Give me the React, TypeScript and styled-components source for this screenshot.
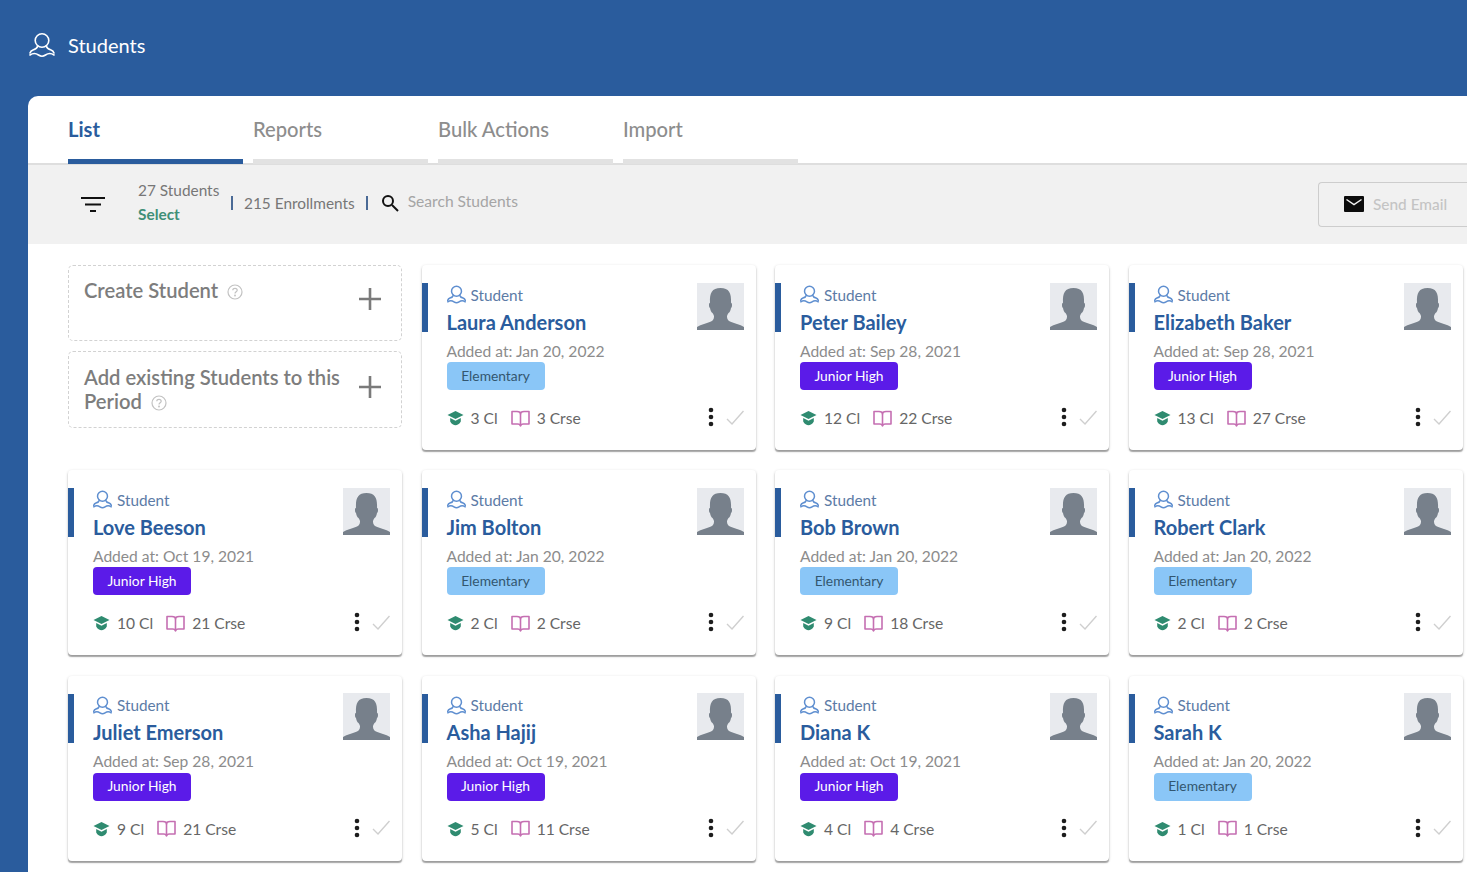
import React from "react";
import styled, { createGlobalStyle } from "styled-components";

const Global = createGlobalStyle`
  html, body { margin: 0; padding: 0; height: 872px; overflow: hidden; background: #2a5c9d; }
  body { font-family: Lato, "Liberation Sans", sans-serif; }
  * { box-sizing: border-box; }
`;

const Page = styled.div`
  width: 1467px;
  height: 872px;
  overflow: hidden;
  background: #2a5c9d;
  display: flex;
  flex-direction: column;
`;
const Header = styled.header`
  height: 96px;
  flex: none;
  display: flex;
  align-items: center;
  gap: 13px;
  padding: 0 0 7px 29px;
  color: #fff;
  font-size: 20px;
`;
const Sheet = styled.main`
  margin-left: 28px;
  flex: 1;
  background: #fff;
  border-top-left-radius: 10px;
  overflow: hidden;
`;
const Tabs = styled.nav`
  height: 69px;
  display: flex;
  gap: 10px;
  padding-left: 40px;
  border-bottom: 2px solid #dedede;
`;
const Tab = styled.div<{ $active?: boolean }>`
  width: 175px;
  height: 68px;
  padding-top: 20px;
  font-size: 20.2px;
  line-height: 26px;
  font-weight: ${(p) => (p.$active ? 700 : 500)};
  color: ${(p) => (p.$active ? "#2a5c9d" : "#8d8d8d")};
  border-bottom: 5px solid ${(p) => (p.$active ? "#2a5c9d" : "#e2e2e2")};
`;
const Toolbar = styled.div`
  height: 79px;
  background: #f1f1f1;
  display: flex;
  align-items: center;
  padding-left: 53px;
  color: #777;
  font-size: 15.4px;
`;
const FilterIcon = styled.svg`
  flex: none;
  margin-right: 33px;
`;
const Counts = styled.div`
  width: 93px;
  line-height: 24px;
  margin-top: -6px;
  white-space: nowrap;
`;
const Select = styled.div`
  color: #3f8f77;
  font-weight: 700;
`;
const Divider = styled.span`
  width: 2px;
  height: 14px;
  background: #4a6a96;
  margin: -4px 11px 0 0;
`;
const Enroll = styled.span`
  margin: -4px 11px 0 0;
  white-space: nowrap;
`;
const SearchIcon = styled.svg`
  margin: -4px 0 0 2px;
`;
const SearchText = styled.span`
  color: #a5a5a5;
  font-size: 15.6px;
  margin-left: 9px;
  margin-top: -8px;
`;
const Spacer = styled.div`
  flex: 1;
`;
const EmailButton = styled.div`
  width: 149px;
  height: 45px;
  border: 1.5px solid #cdcdcd;
  border-right-width: 0;
  border-radius: 4px 0 0 4px;
  display: flex;
  align-items: center;
  gap: 9px;
  padding: 0 0 1px 25px;
  color: #c4c4c4;
  font-size: 15.4px;
  font-weight: 500;
`;
const Grid = styled.section`
  display: grid;
  grid-template-columns: repeat(4, 334px);
  grid-auto-rows: 185px;
  column-gap: 19.5px;
  row-gap: 20.25px;
  padding: 21px 0 0 40px;
`;
const CreateColumn = styled.div`
  display: flex;
  flex-direction: column;
  gap: 10px;
`;
const CreateBox = styled.div<{ $h: number }>`
  height: ${(p) => p.$h}px;
  border: 1px dashed #d2d2d2;
  border-radius: 5px;
  padding: ${(p) => (p.$h === 76 ? 12 : 13)}px 19px 0 15px;
  display: flex;
  justify-content: space-between;
  color: #7d7d7d;
  font-size: 20.2px;
  line-height: 24px;
  font-weight: 600;
`;
const CreateText = styled.div`
  width: 262px;
`;
const Help = styled.svg`
  display: inline-block;
  vertical-align: -2px;
  margin-left: 9px;
`;
const PlusWrap = styled.div<{ $top: number }>`
  margin-top: ${(p) => p.$top}px;
  flex: none;
  height: 24px;
`;
const Card = styled.article`
  background: #fff;
  border-radius: 4px;
  box-shadow: 0 1px 3px rgba(0, 0, 0, 0.22), 0 2px 1px -0.5px rgba(0, 0, 0, 0.28);
  display: flex;
  align-items: flex-start;
`;
const Accent = styled.div`
  width: 6px;
  height: 49px;
  margin-top: 18px;
  background: #2a5c9d;
  flex: none;
`;
const CardBody = styled.div`
  flex: 1;
  padding: 17.5px 12px 0 19px;
  display: flex;
  flex-direction: column;
`;
const TopRow = styled.div`
  display: flex;
  justify-content: space-between;
  height: 55.5px;
`;
const Role = styled.div`
  display: flex;
  align-items: center;
  gap: 5px;
  height: 24px;
  color: #5c7ba6;
  font-size: 15.3px;
`;
const Name = styled.div`
  color: #2a5c9d;
  font-size: 20px;
  line-height: 27px;
  font-weight: 700;
  margin-top: 2px;
  white-space: nowrap;
`;
const Added = styled.div`
  color: #8c8c8c;
  font-size: 15.6px;
  line-height: 20px;
  margin-top: 2.5px;
`;
const Badge = styled.div<{ $kind: "elementary" | "junior" }>`
  width: 98px;
  height: 28px;
  margin-top: 1.5px;
  padding-bottom: 2px;
  border-radius: 4px;
  display: flex;
  align-items: center;
  justify-content: center;
  font-size: 13.8px;
  background: ${(p) => (p.$kind === "junior" ? "#5b1be8" : "#8ac6f7")};
  color: ${(p) => (p.$kind === "junior" ? "#fff" : "#33566f")};
`;
const Stats = styled.div`
  display: flex;
  align-items: center;
  height: 24px;
  margin-top: 16px;
  color: #666;
  font-size: 15.6px;
`;
const StatText = styled.span<{ $mr?: number }>`
  margin-left: 7px;
  margin-right: ${(p) => p.$mr ?? 0}px;
`;
const Kebab = styled.svg`
  margin-left: auto;
  margin-top: -2px;
`;
const Check = styled.svg`
  margin: -2px 0 0 12px;
`;
const AvatarSvg = styled.svg`
  flex: none;
`;

const StudentIcon = ({ size = 19, color = "#5f8fd0", sw = 1.5 }: { size?: number; color?: string; sw?: number }) => (
  <svg width={size} height={size} viewBox="0 0 26 26" fill="none" stroke={color} strokeWidth={sw * (26 / size)} strokeLinecap="round" strokeLinejoin="round">
    <circle cx="13" cy="8.500" r="6.800" />
    <path d="M8.800 14c-.5 1.700-2.500 3.200-4.800 3.900C2.500 18.400 1.500 19.400 1 21" />
    <path d="M17.200 14c.5 1.700 2.500 3.200 4.800 3.900 1.500.5 2.500 1.500 3 3.100" />
    <path d="M1 23c2.500-1.800 6-1.800 8.500 0 1.300.9 2.300 1.300 3.500 1.300s2.200-.4 3.500-1.300c2.500-1.800 6-1.800 8.500 0" />
  </svg>
);
const CapIcon = () => (
  <svg width="17" height="16" viewBox="0 0 17 16" fill="#2f8b70">
    <path d="M8.500 1 16.500 5 8.500 9 .5 5Z" />
    <path d="M3.200 8 8.500 10.700 13.800 8v3.500C12.500 14 10.300 15.200 8.500 15.200S4.500 14 3.200 11.500Z" />
  </svg>
);
const BookIcon = () => (
  <svg width="19" height="17" viewBox="0 0 19 17" fill="none" stroke="#c56fb2" strokeWidth="1.600" strokeLinejoin="round">
    <path d="M1 1.500h5c1.800 0 3.500 1 3.500 2.500 0-1.500 1.700-2.500 3.500-2.500h5v12.500h-5.500c-1.500 0-3 .6-3 2 0-1.400-1.500-2-3-2H1Z" />
    <path d="M9.500 4v12" />
  </svg>
);
const Avatar = () => (
  <AvatarSvg width="47" height="47" viewBox="0 0 47 47">
    <rect width="47" height="47" fill="#e8eaee" />
    <path
      d="M0 47v-3c4-2.500 10-3.500 14-5.500 2-1 3-2.500 3-5 0-1-.5-2-1.500-3.500-1.500-1-2-2.500-2.500-5-.7-.5-1-1.500-1-3 0-1.500.3-2 1-2.300C12.500 10 15 5 23.500 5S34.500 10 34 19.700c.7.300 1 .8 1 2.300 0 1.500-.3 2.500-1 3-.5 2.500-1 4-2.500 5-1 1.500-1.500 2.500-1.500 3.500 0 2.500 1 4 3 5 4 2 10 3 14 5.500v3Z"
      fill="#77808b"
    />
  </AvatarSvg>
);
const PlusIcon = () => (
  <svg width="24" height="24" viewBox="0 0 24 24" stroke="#7a7a7a" strokeWidth="2.600">
    <path d="M12 1v22M1 12h22" />
  </svg>
);
const HelpIcon = () => (
  <Help width="16" height="16" viewBox="0 0 16 16" fill="none" stroke="#c2c2c2" strokeWidth="1.200">
    <circle cx="8" cy="8" r="7" />
    <path d="M5.800 6.300C5.800 5 6.800 4.300 8 4.300s2.200.8 2.200 1.900c0 1.500-2.200 1.600-2.200 3.300" />
    <circle cx="8" cy="11.500" r=".4" />
  </Help>
);
const KebabIcon = () => (
  <Kebab width="6" height="20" viewBox="0 0 6 20" fill="#1d1d1d">
    <circle cx="3" cy="3" r="2.300" />
    <circle cx="3" cy="10" r="2.300" />
    <circle cx="3" cy="17" r="2.300" />
  </Kebab>
);
const CheckIcon = () => (
  <Check width="18" height="15" viewBox="0 0 18 15" fill="none" stroke="#cfcfcf" strokeWidth="1.400">
    <path d="M1 9l5 5L17.500 1" />
  </Check>
);

type Student = { name: string; added: string; kind: "elementary" | "junior"; cl: number; crse: number };
const students: Student[] = [
  { name: "Laura Anderson", added: "Jan 20, 2022", kind: "elementary", cl: 3, crse: 3 },
  { name: "Peter Bailey", added: "Sep 28, 2021", kind: "junior", cl: 12, crse: 22 },
  { name: "Elizabeth Baker", added: "Sep 28, 2021", kind: "junior", cl: 13, crse: 27 },
  { name: "Love Beeson", added: "Oct 19, 2021", kind: "junior", cl: 10, crse: 21 },
  { name: "Jim Bolton", added: "Jan 20, 2022", kind: "elementary", cl: 2, crse: 2 },
  { name: "Bob Brown", added: "Jan 20, 2022", kind: "elementary", cl: 9, crse: 18 },
  { name: "Robert Clark", added: "Jan 20, 2022", kind: "elementary", cl: 2, crse: 2 },
  { name: "Juliet Emerson", added: "Sep 28, 2021", kind: "junior", cl: 9, crse: 21 },
  { name: "Asha Hajij", added: "Oct 19, 2021", kind: "junior", cl: 5, crse: 11 },
  { name: "Diana K", added: "Oct 19, 2021", kind: "junior", cl: 4, crse: 4 },
  { name: "Sarah K", added: "Jan 20, 2022", kind: "elementary", cl: 1, crse: 1 },
];

const StudentCard = ({ s }: { s: Student }) => (
  <Card>
    <Accent />
    <CardBody>
      <TopRow>
        <div>
          <Role>
            <StudentIcon />
            Student
          </Role>
          <Name>{s.name}</Name>
        </div>
        <Avatar />
      </TopRow>
      <Added>Added at: {s.added}</Added>
      <Badge $kind={s.kind}>{s.kind === "junior" ? "Junior High" : "Elementary"}</Badge>
      <Stats>
        <CapIcon />
        <StatText $mr={13}>{s.cl} Cl</StatText>
        <BookIcon />
        <StatText>{s.crse} Crse</StatText>
        <KebabIcon />
        <CheckIcon />
      </Stats>
    </CardBody>
  </Card>
);

export default function App() {
  return (
    <Page>
      <Global />
      <Header>
        <StudentIcon size={26} color="#fff" sw={1.6} />
        Students
      </Header>
      <Sheet>
        <Tabs>
          <Tab $active>List</Tab>
          <Tab>Reports</Tab>
          <Tab>Bulk Actions</Tab>
          <Tab>Import</Tab>
        </Tabs>
        <Toolbar>
          <FilterIcon width="24" height="18" viewBox="0 0 24 18" fill="#111">
            <rect y="1" width="24" height="2" />
            <rect x="4" y="7.500" width="16" height="2" />
            <rect x="9" y="14" width="6" height="2" />
          </FilterIcon>
          <Counts>
            <div>27 Students</div>
            <Select>Select</Select>
          </Counts>
          <Divider />
          <Enroll>215 Enrollments</Enroll>
          <Divider />
          <SearchIcon width="18" height="18" viewBox="0 0 18 18" fill="none" stroke="#111" strokeWidth="2">
            <circle cx="7" cy="7" r="5" />
            <path d="M11 11l6 6" />
          </SearchIcon>
          <SearchText>Search Students</SearchText>
          <Spacer />
          <EmailButton>
            <svg width="20" height="16" viewBox="0 0 20 16">
              <rect width="20" height="16" rx="1" fill="#0c0c0c" />
              <path d="M2.500 3.500 10 8.500l7.500-5" fill="none" stroke="#f1f1f1" strokeWidth="1.500" />
            </svg>
            Send Email
          </EmailButton>
        </Toolbar>
        <Grid>
          <CreateColumn>
            <CreateBox $h={76}>
              <CreateText>
                Create Student
                <HelpIcon />
              </CreateText>
              <PlusWrap $top={9}>
                <PlusIcon />
              </PlusWrap>
            </CreateBox>
            <CreateBox $h={77}>
              <CreateText>
                Add existing Students to this Period
                <HelpIcon />
              </CreateText>
              <PlusWrap $top={10}>
                <PlusIcon />
              </PlusWrap>
            </CreateBox>
          </CreateColumn>
          {students.map((s) => (
            <StudentCard key={s.name} s={s} />
          ))}
        </Grid>
      </Sheet>
    </Page>
  );
}
